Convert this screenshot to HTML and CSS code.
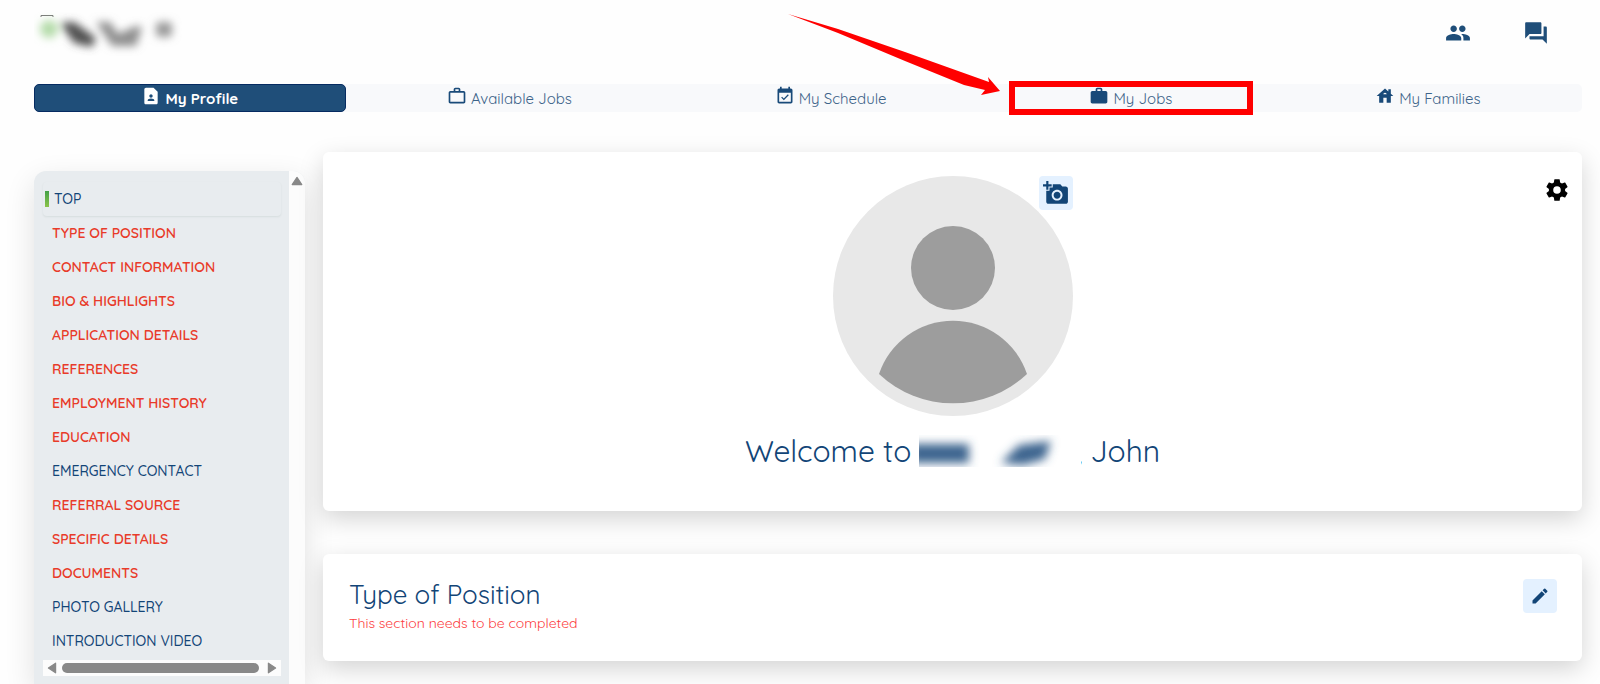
FILE: index.html
```html
<!DOCTYPE html>
<html lang="en">
<head>
  <meta charset="UTF-8">
  <meta name="viewport" content="width=device-width, initial-scale=1.0">
  <title>My Profile</title>
  <link rel="stylesheet" href="styles.css">
</head>
<body>
  <header class="header">
    <a class="logo" href="#" aria-label="Home">
      <svg width="150" height="48" viewBox="0 0 150 48">
        <defs>
          <filter id="soft" x="-50%" y="-50%" width="200%" height="200%"><feGaussianBlur stdDeviation="4"/></filter>
        </defs>
        <path d="M7 9V7.500h12V9" fill="none" stroke="#777"/>
        <g filter="url(#soft)">
          <circle cx="15" cy="21" r="9" fill="#b4dba9"/>
          <path d="M26 15l14-1 22 16-4 9-18-4z" fill="#505050"/>
          <path d="M62 14l14 0 8 12 18-8 6 1-6 19-24 0z" fill="#8f8f8f"/>
          <rect x="122" y="14" width="16" height="15" rx="4" fill="#999"/>
        </g>
      </svg>
    </a>
    <div class="header-icons">
      <a href="#" aria-label="People">
        <svg class="icon" viewBox="0 0 24 24"><path d="M16 11c1.660 0 2.990-1.340 2.990-3S17.660 5 16 5s-3 1.340-3 3 1.340 3 3 3zm-8 0c1.660 0 2.990-1.340 2.990-3S9.660 5 8 5 5 6.340 5 8s1.340 3 3 3zm0 2c-2.330 0-7 1.170-7 3.500V19h14v-2.500c0-2.330-4.670-3.500-7-3.500zm8 0c-.29 0-.62.020-.97.050 1.160.84 1.970 1.970 1.970 3.450V19h6v-2.500c0-2.330-4.670-3.500-7-3.500z"/></svg>
      </a>
      <a href="#" aria-label="Messages">
        <svg class="icon" viewBox="0 0 24 24"><path d="M21 6h-2v9H6v2c0 .55.45 1 1 1h11l4 4V7c0-.55-.45-1-1-1zm-4 6V3c0-.55-.45-1-1-1H3c-.55 0-1 .45-1 1v14l4-4h10c.55 0 1-.45 1-1z"/></svg>
      </a>
    </div>
  </header>

  <nav class="tabs">
    <a class="tab active" href="#"><svg class="tab-icon" viewBox="0 0 24 24"><path d="M15 2H6c-1.100 0-2 .9-2 2v16c0 1.100.9 2 2 2h12c1.100 0 2-.9 2-2V7l-5-5zm-3 8c1.100 0 2 .9 2 2s-.9 2-2 2-2-.9-2-2 .9-2 2-2zm4 8H8v-.570c0-.81.480-1.530 1.220-1.850a6.950 6.950 0 0 1 5.560 0c.74.320 1.220 1.040 1.220 1.850V18z"/></svg>My Profile</a>
    <a class="tab" href="#"><svg class="tab-icon" viewBox="0 0 24 24"><path d="M14 6V4h-4v2h4zM4 8v11h16V8H4zm16-2c1.110 0 2 .89 2 2v11c0 1.110-.89 2-2 2H4c-1.110 0-2-.89-2-2V8c0-1.110.89-2 2-2h4V4c0-1.110.89-2 2-2h4c1.110 0 2 .89 2 2v2h4z"/></svg>Available Jobs</a>
    <a class="tab" href="#"><svg class="tab-icon" viewBox="0 0 24 24"><path d="M16.530 11.060 15.470 10l-4.880 4.880-2.120-2.120-1.060 1.060L10.590 17l5.940-5.940zM19 3h-1V1h-2v2H8V1H6v2H5c-1.110 0-2 .9-2 2v14c0 1.100.89 2 2 2h14c1.100 0 2-.9 2-2V5c0-1.100-.9-2-2-2zm0 16H5V8h14v11z"/></svg>My Schedule</a>
    <a class="tab" href="#"><svg class="tab-icon" viewBox="0 0 24 24"><path d="M20 6h-4V4c0-1.110-.89-2-2-2h-4c-1.110 0-2 .89-2 2v2H4c-1.110 0-2 .89-2 2v11c0 1.110.89 2 2 2h16c1.110 0 2-.89 2-2V8c0-1.110-.89-2-2-2zm-6 0h-4V4h4v2z"/></svg>My Jobs
      <span class="highlight">
        <svg class="arrow" width="212" height="84" viewBox="0 0 212 84"><path d="M0 0 50 15 117 38 201 68 200 63 212 77 193 81 197 76 176 71 117 47 50 19z" fill="#f00"/></svg>
      </span>
    </a>
    <a class="tab" href="#"><svg class="tab-icon" viewBox="0 0 24 24"><path d="M19 9.300V4h-3v2.600L12 3 2 12h3v8h5v-6h4v6h5v-8h3l-3-2.700zM10 10c0-1.100.9-2 2-2s2 .9 2 2h-4z"/></svg>My Families</a>
  </nav>

  <div class="layout">
    <aside class="sidebar">
      <div class="sidebar-body">
        <ul class="menu">
          <li><a class="current" href="#">TOP</a></li>
          <li><a class="missing" href="#">TYPE OF POSITION</a></li>
          <li><a class="missing" href="#">CONTACT INFORMATION</a></li>
          <li><a class="missing" href="#">BIO &amp; HIGHLIGHTS</a></li>
          <li><a class="missing" href="#">APPLICATION DETAILS</a></li>
          <li><a class="missing" href="#">REFERENCES</a></li>
          <li><a class="missing" href="#">EMPLOYMENT HISTORY</a></li>
          <li><a class="missing" href="#">EDUCATION</a></li>
          <li><a href="#">EMERGENCY CONTACT</a></li>
          <li><a class="missing" href="#">REFERRAL SOURCE</a></li>
          <li><a class="missing" href="#">SPECIFIC DETAILS</a></li>
          <li><a class="missing" href="#">DOCUMENTS</a></li>
          <li><a href="#">PHOTO GALLERY</a></li>
          <li><a href="#">INTRODUCTION VIDEO</a></li>
        </ul>
        <div class="scroll-x">
          <svg width="10" height="12" viewBox="0 0 8 10"><path d="M7 1v8L1 5z" stroke="#888" stroke-linejoin="round"/></svg>
          <span class="thumb"></span>
          <svg width="10" height="12" viewBox="0 0 8 10"><path d="M1 1v8l6-4z" stroke="#888" stroke-linejoin="round"/></svg>
        </div>
      </div>
      <div class="scroll-y">
        <svg width="12" height="10" viewBox="0 0 10 8"><path d="M1 7h8L5 1z" stroke="#888" stroke-linejoin="round"/></svg>
      </div>
    </aside>

    <main class="content">
      <section class="card welcome">
        <div class="avatar">
          <svg viewBox="0 0 240 240">
            <circle cx="120" cy="120" r="120" fill="#e8e8e8"/>
            <circle cx="120" cy="92" r="42" fill="#9d9d9d"/>
            <path d="M46 198a78 78 0 0 1 148 0 108 108 0 0 1-148 0z" fill="#9d9d9d"/>
          </svg>
          <button class="icon-btn photo-btn" aria-label="Add photo">
            <svg class="icon" viewBox="0 0 24 24"><path d="M3 4V1h2v3h3v2H5v3H3V6H0V4h3zm3 6V7h3V4h7l1.830 2H21c1.100 0 2 .9 2 2v12c0 1.100-.9 2-2 2H5c-1.100 0-2-.9-2-2V10h3zm7 9c2.760 0 5-2.240 5-5s-2.240-5-5-5-5 2.240-5 5 2.240 5 5 5zm-3.200-5c0 1.770 1.430 3.200 3.200 3.200s3.200-1.430 3.200-3.200-1.430-3.200-3.200-3.200-3.200 1.430-3.200 3.200z"/></svg>
          </button>
        </div>
        <h1>Welcome to
          <svg class="agency" width="162" height="32" viewBox="0 0 162 32">
            <defs>
              <filter id="haze" x="-50%" y="-50%" width="200%" height="200%"><feGaussianBlur stdDeviation="5"/></filter>
            </defs>
            <g filter="url(#haze)" fill="#3d658f">
              <rect x="-8" y="9" width="58" height="19"/>
              <path d="M82 28l18-18 32-4-6 18-22 6z"/>
            </g>
          </svg>, John</h1>
        <button class="settings" aria-label="Settings">
          <svg class="icon" viewBox="0 0 24 24"><path d="M19.500 12c0-.340-.030-.66-.070-1l2.110-1.630c.190-.150.240-.42.120-.64l-2-3.460c-.12-.22-.39-.31-.61-.22l-2.490 1c-.52-.39-1.060-.73-1.690-.98l-.37-2.650A.506.506 0 0 0 14 2h-4c-.25 0-.46.180-.5.420l-.37 2.650c-.63.250-1.170.59-1.690.98l-2.490-1c-.22-.090-.49 0-.61.220l-2 3.460c-.13.220-.070.490.12.640L4.570 11c-.040.340-.070.660-.070 1s.030.650.070.970l-2.110 1.660c-.190.150-.25.420-.12.640l2 3.460c.12.220.39.300.61.220l2.490-1.010c.52.400 1.060.74 1.690.99l.37 2.650c.040.240.250.42.5.42h4c.25 0 .46-.18.5-.42l.37-2.650c.63-.26 1.170-.59 1.690-.99l2.490 1.010c.22.080.49 0 .61-.22l2-3.460c.12-.22.070-.49-.12-.64l-2.110-1.660c.040-.32.070-.64.070-.97zM12 15.500a3.500 3.500 0 1 1 0-7 3.500 3.500 0 0 1 0 7z"/></svg>
        </button>
      </section>

      <section class="card position">
        <div>
          <h2>Type of Position</h2>
          <p class="warning">This section needs to be completed</p>
        </div>
        <button class="icon-btn" aria-label="Edit">
          <svg class="icon small" viewBox="0 0 24 24"><path d="M20.710 7.040a1 1 0 0 0 0-1.410l-2.340-2.340a1 1 0 0 0-1.410 0l-1.840 1.830 3.750 3.750zM3 17.250V21h3.750L17.810 9.930l-3.750-3.750z"/></svg>
        </button>
      </section>
    </main>
  </div>
</body>
</html>
```
FILE: styles.css
```css
* {
  box-sizing: border-box;
}
body {
  margin: 0;
  min-height: 100vh;
  display: flex;
  flex-direction: column;
  padding: 0 18px 0 34px;
  background: #fefefe;
  color: #124577;
  font-family: Quicksand, Lato, sans-serif;
  font-size: 15px;
}
a {
  color: inherit;
  text-decoration: none;
}
button {
  border: none;
  padding: 0;
  background: none;
  color: inherit;
  cursor: pointer;
}
.icon {
  display: block;
  width: 26px;
  height: 26px;
  fill: currentColor;
}
.icon.small {
  width: 20px;
  height: 20px;
}

.header {
  display: flex;
  justify-content: space-between;
  height: 84px;
  padding: 8px 33px 0 0;
}
.logo svg {
  display: block;
}
.header-icons {
  display: flex;
  gap: 52px;
  padding-top: 12px;
  color: #1f4e79;
}

.tabs {
  display: flex;
  height: 28px;
  border-radius: 5px;
  background: #f8f9fb;
}
.tab {
  position: relative;
  flex: 1 1 auto;
  display: flex;
  justify-content: center;
  align-items: center;
  gap: 4px;
  color: #3c6389;
}
.tab.active {
  padding: 0 5px;
  border: 1px solid #062b61;
  border-radius: 5px;
  background: #1f4e79;
  color: #fff;
  font-weight: bold;
}
.tab-icon {
  width: 20px;
  height: 20px;
  margin-bottom: 5px;
  fill: #194a79;
}
.tab.active .tab-icon {
  fill: #fff;
}
.highlight {
  position: absolute;
  inset: -3px 21px;
  border: 6px solid #f00;
}
.arrow {
  position: absolute;
  right: 100%;
  bottom: 11px;
  margin-right: 15px;
}

.layout {
  flex: 1;
  display: flex;
  gap: 18px;
  padding-top: 40px;
}
.sidebar {
  flex: none;
  display: flex;
  width: 271px;
  margin-top: 19px;
  border-radius: 12px 12px 0 0;
  background: #e8ecef;
  box-shadow: 0 10px 30px rgba(0, 0, 0, 0.12);
}
.sidebar-body {
  flex: 1;
  padding: 11px 8px 0 9px;
}
.menu {
  list-style: none;
  margin: 0;
  padding: 0;
}
.menu a {
  display: flex;
  align-items: center;
  height: 34px;
  padding-left: 9px;
  font-size: 14px;
  font-weight: 500;
}
.menu .missing {
  color: #e83b2a;
  font-weight: 600;
}
.menu .current {
  gap: 5px;
  padding-left: 2px;
  border-radius: 4px;
  box-shadow: 0 1px 2px rgba(60, 100, 80, 0.1);
}
.menu .current::before {
  content: "";
  width: 4px;
  height: 16px;
  background: linear-gradient(#43a047, #8bc34a);
}
.scroll-x {
  display: flex;
  align-items: center;
  justify-content: space-between;
  gap: 5px;
  height: 16px;
  margin-top: 2px;
  padding: 0 4px;
  background: #fcfcfc;
}
.scroll-x svg,
.scroll-y svg {
  fill: #888;
}
.thumb {
  flex: 1;
  height: 10px;
  margin-right: 3px;
  border-radius: 5px;
  background: #888;
}
.scroll-y {
  display: flex;
  justify-content: center;
  width: 16px;
  padding-top: 5px;
  border-radius: 0 12px 0 0;
  background: #fcfcfc;
}

.content {
  flex: 1;
  display: flex;
  flex-direction: column;
  gap: 43px;
}
.card {
  border-radius: 6px;
  background: #fff;
  box-shadow: 0 8px 24px rgba(0, 0, 0, 0.17);
}
.welcome {
  position: relative;
  display: flex;
  flex-direction: column;
  align-items: center;
  padding: 24px 24px 40px;
}
.avatar {
  position: relative;
  width: 240px;
  height: 240px;
}
.icon-btn {
  display: flex;
  align-items: center;
  justify-content: center;
  width: 34px;
  height: 34px;
  border-radius: 4px;
  background: #e4f1ff;
}
.photo-btn {
  position: absolute;
  top: 0;
  right: 0;
}
h1,
h2 {
  margin: 0;
  font-weight: normal;
}
h1 {
  margin-top: 15px;
  font-size: 30px;
  line-height: 40px;
}
.agency {
  position: relative;
  margin-right: -5px;
  background: #fff;
  vertical-align: -5px;
}
.settings {
  position: absolute;
  top: 25px;
  right: 12px;
  color: #000;
}
.position {
  display: flex;
  justify-content: space-between;
  padding: 25px 25px 28px 26px;
}
h2 {
  font-size: 26px;
  line-height: 32px;
}
.warning {
  margin: 2px 0 0;
  color: #fc3c40;
  font-size: 14px;
  line-height: 20px;
}
```
